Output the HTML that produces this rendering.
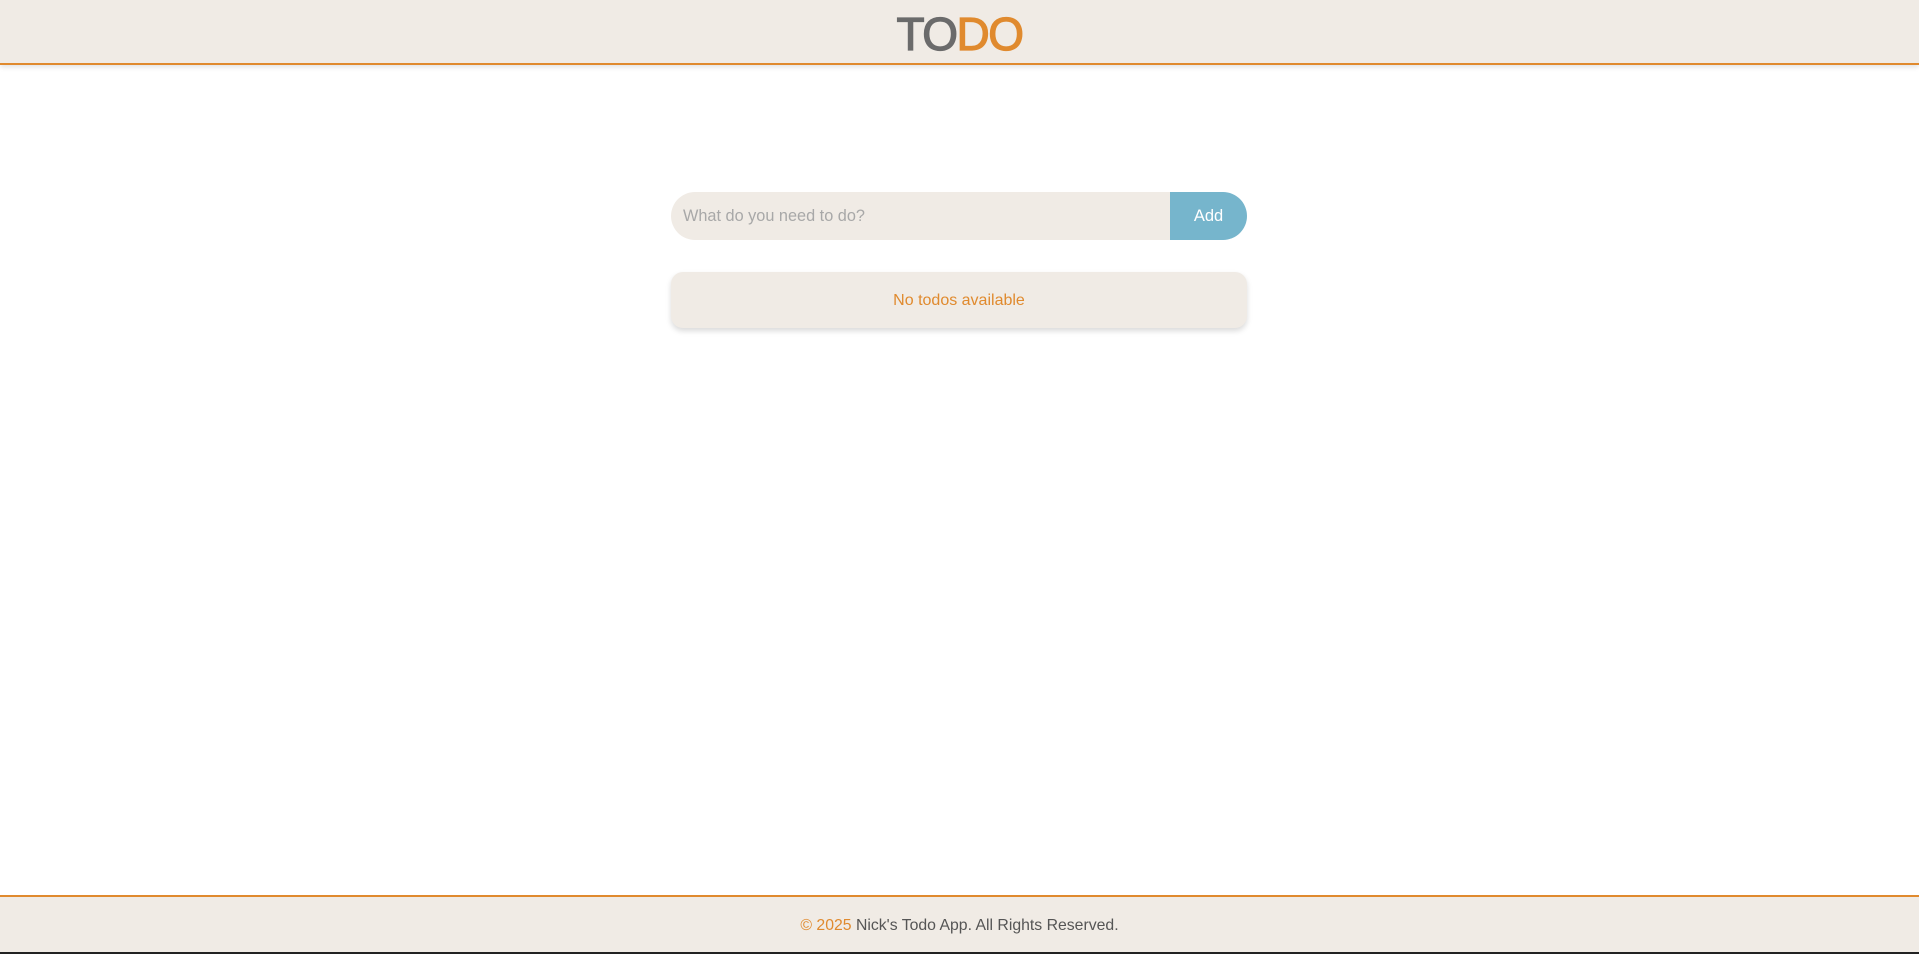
<!DOCTYPE html>
<html><head><meta charset="utf-8"><style>
html,body{margin:0;padding:0;width:1919px;height:954px;overflow:hidden;background:#fff;font-family:"Liberation Sans",sans-serif;}
header{position:absolute;left:0;top:0;width:1919px;height:63px;background:#f0ebe5;border-bottom:2px solid #e08a2e;box-shadow:0 2px 5px rgba(0,0,0,0.12);text-align:center;}
header h1{margin:0;font-size:46px;font-weight:normal;line-height:68px;letter-spacing:-1.5px;color:#6b6b6b;-webkit-text-stroke:1.2px currentColor;}
header h1 span{color:#e08a2e;}
.form{position:absolute;left:671px;top:192px;width:576px;height:48px;}
.inp{position:absolute;left:0;top:0;width:500px;height:48px;background:#f0ebe5;border-radius:24px 0 0 24px;color:#a8a8a8;font-size:16.3px;line-height:48px;padding-left:12px;box-sizing:border-box;}
.btn{position:absolute;left:499px;top:0;width:77px;height:48px;background:#76b5cc;border-radius:0 24px 24px 0;color:#fff;font-size:16.5px;line-height:48px;text-align:center;}
.card{position:absolute;left:671px;top:272px;width:576px;height:56px;background:#f0ebe5;border-radius:12px;box-shadow:0 3px 6px rgba(0,0,0,0.15);color:#e08a2e;font-size:16px;line-height:58px;text-align:center;}
footer{position:absolute;left:0;top:895px;width:1919px;height:57px;background:#f0ebe5;border-top:2px solid #e08a2e;text-align:center;font-size:15.8px;line-height:57px;color:#555;}
footer span{color:#e08a2e;}
.bot{position:absolute;left:0;top:952px;width:1919px;height:2px;background:#222;}
</style></head><body>
<header><h1>TO<span>DO</span></h1></header>
<div class="form"><div class="inp">What do you need to do?</div><div class="btn">Add</div></div>
<div class="card">No todos available</div>
<footer><span>© 2025</span> Nick's Todo App. All Rights Reserved.</footer>
<div class="bot"></div>
</body></html>
